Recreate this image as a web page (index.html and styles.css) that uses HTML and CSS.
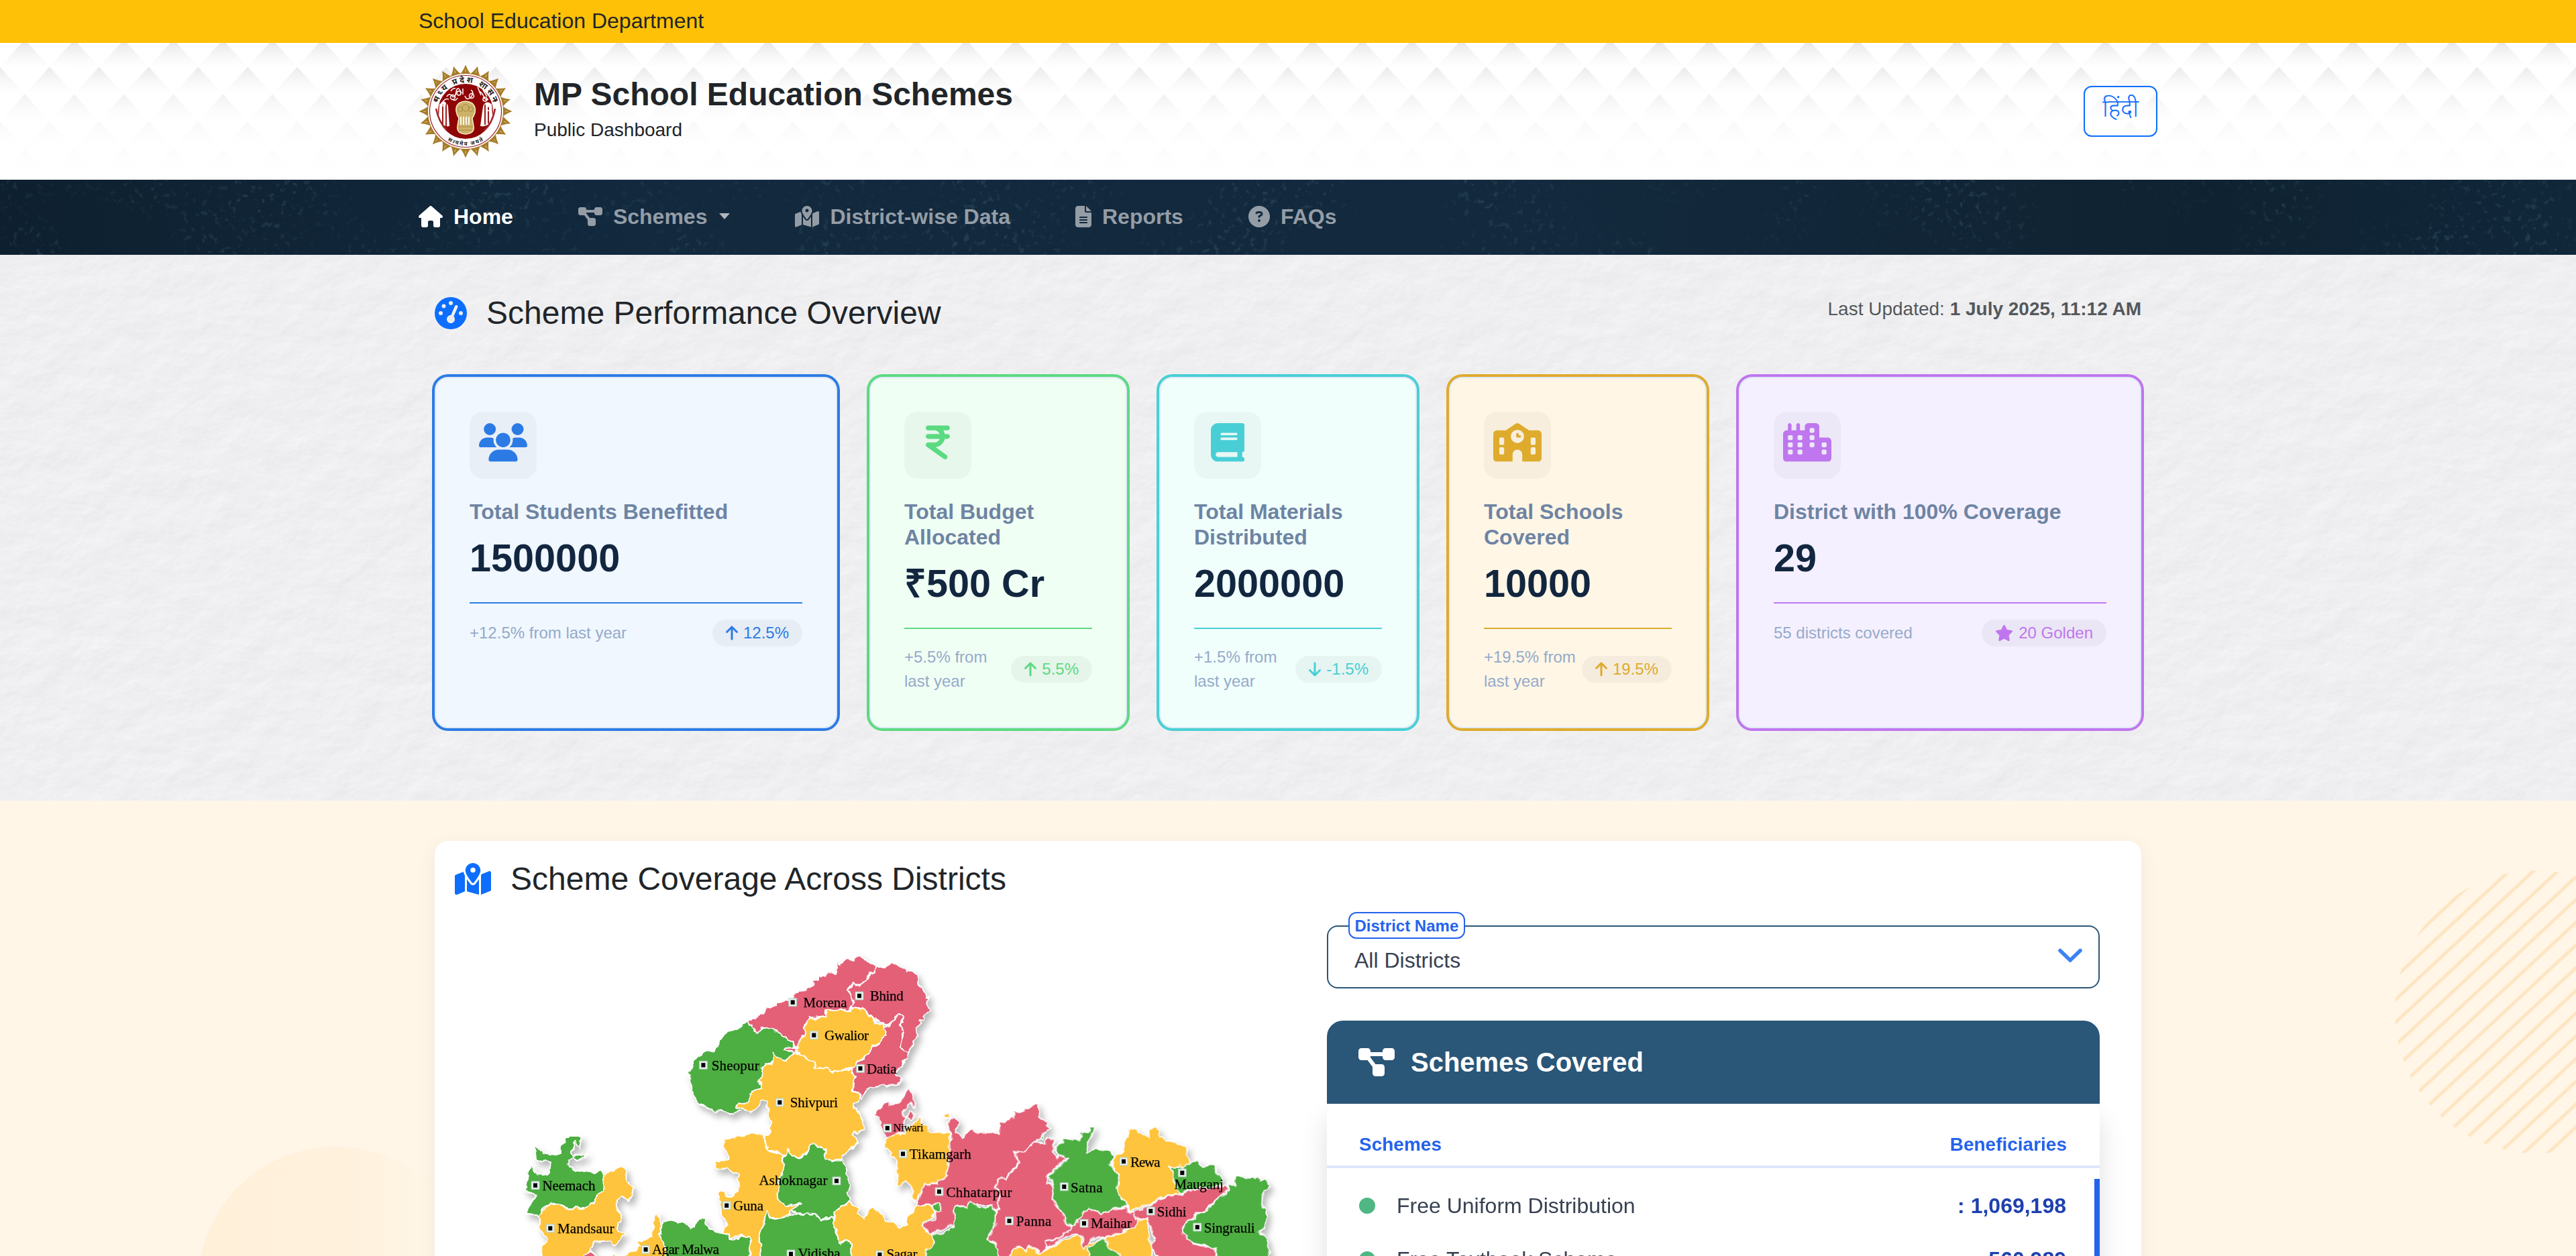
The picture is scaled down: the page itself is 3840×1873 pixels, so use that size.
FILE: index.html
```html
<!DOCTYPE html>
<html lang="en">
<head>
<meta charset="utf-8">
<title>MP School Education Schemes</title>
<link rel="stylesheet" href="styles.css">
</head>
<body>
<svg class="defs" width="0" height="0" aria-hidden="true">
  <symbol id="i-home" viewBox="0 0 576 512"><path d="M575.8 255.5c0 18-15 32.1-32 32.1h-32l.7 160.2c0 2.7-.2 5.4-.5 8.1V472c0 22.1-17.9 40-40 40H456c-1.1 0-2.2 0-3.3-.1c-1.4 .1-2.8 .1-4.2 .1H416 392c-22.1 0-40-17.9-40-40V448 384c0-17.7-14.3-32-32-32H256c-17.7 0-32 14.3-32 32v64 24c0 22.1-17.9 40-40 40H160 128.1c-1.5 0-3-.1-4.5-.2c-1.2 .1-2.4 .2-3.6 .2H104c-22.1 0-40-17.9-40-40V360c0-.9 0-1.9 .1-2.8V287.6H32c-18 0-32-14-32-32.1c0-9 3-17 10-24L266.4 8c7-7 15-8 22-8s15 2 21 7L564.8 231.5c8 7 12 15 11 24z"/></symbol>
  <symbol id="i-diagram" viewBox="0 0 576 512"><path d="M0 80C0 53.5 21.5 32 48 32h96c26.5 0 48 21.5 48 48V96H384V80c0-26.5 21.5-48 48-48h96c26.5 0 48 21.5 48 48v96c0 26.5-21.5 48-48 48H432c-26.5 0-48-21.5-48-48V160H192v16c0 1.7-.1 3.4-.3 5L272 288h96c26.5 0 48 21.5 48 48v96c0 26.5-21.5 48-48 48H272c-26.5 0-48-21.5-48-48V336c0-1.7 .1-3.4 .3-5L144 224H48c-26.5 0-48-21.5-48-48V80z"/></symbol>
  <symbol id="i-map" viewBox="0 0 576 512"><path fill-rule="evenodd" d="M408 120c0 54.6-73.1 151.9-105.2 192c-7.7 9.6-22 9.6-29.6 0C241.1 271.9 168 174.6 168 120C168 53.7 221.7 0 288 0s120 53.7 120 120zm8 80.4c3.5-6.9 6.7-13.8 9.6-20.6c.5-1.2 1-2.5 1.5-3.7l116-46.4C558.9 123.4 576 135 576 152V422.8c0 9.8-6 18.6-15.1 22.3L416 503V200.4zM137.6 138.3c2.4 14.1 7.2 28.3 12.8 41.5c2.9 6.8 6.1 13.7 9.6 20.6V451.8L32.9 502.7C17.1 509 0 497.4 0 480.4V209.6c0-9.8 6-18.6 15.1-22.3l122.6-49zM327.8 332c13.9-17.4 35.7-45.7 56.2-77V504.3L192 449.4V255c20.5 31.3 42.3 59.6 56.2 77c20.5 25.6 59.1 25.6 79.6 0zM288 152a40 40 0 1 0 0-80 40 40 0 1 0 0 80z"/></symbol>
  <symbol id="i-file" viewBox="0 0 384 512"><path fill-rule="evenodd" d="M64 0C28.7 0 0 28.7 0 64V448c0 35.3 28.7 64 64 64H320c35.3 0 64-28.7 64-64V160H256c-17.7 0-32-14.3-32-32V0H64zM256 0V128H384L256 0zM112 256H272c8.8 0 16 7.2 16 16s-7.2 16-16 16H112c-8.8 0-16-7.2-16-16s7.2-16 16-16zm0 64H272c8.8 0 16 7.2 16 16s-7.2 16-16 16H112c-8.8 0-16-7.2-16-16s7.2-16 16-16zm0 64H272c8.8 0 16 7.2 16 16s-7.2 16-16 16H112c-8.8 0-16-7.2-16-16s7.2-16 16-16z"/></symbol>
  <symbol id="i-question" viewBox="0 0 512 512"><path fill-rule="evenodd" d="M256 512A256 256 0 1 0 256 0a256 256 0 1 0 0 512zM169.8 165.3c7.9-22.3 29.1-37.3 52.8-37.3h58.3c34.9 0 63.1 28.3 63.1 63.1c0 22.6-12.1 43.5-31.7 54.8L280 264.4c-.2 13-10.9 23.6-24 23.6c-13.3 0-24-10.7-24-24V250.5c0-8.6 4.6-16.5 12.1-20.8l44.3-25.4c4.7-2.7 7.6-7.7 7.6-13.1c0-8.4-6.8-15.1-15.1-15.1H222.6c-3.4 0-6.4 2.1-7.5 5.3l-.4 1.2c-4.4 12.5-18.2 19-30.6 14.6s-19-18.2-14.6-30.6l.4-1.2zM224 352a32 32 0 1 1 64 0 32 32 0 1 1 -64 0z"/></symbol>
  <symbol id="i-gauge" viewBox="0 0 512 512"><path fill-rule="evenodd" d="M0 256a256 256 0 1 1 512 0A256 256 0 1 1 0 256zM288 96a32 32 0 1 0 -64 0 32 32 0 1 0 64 0zM256 416c35.3 0 64-28.7 64-64c0-17.4-6.9-33.1-18.1-44.6L366 161.7c5.3-12.1-.2-26.3-12.3-31.6s-26.3 .2-31.6 12.3L257.9 288c-.6 0-1.3 0-1.9 0c-35.3 0-64 28.7-64 64s28.7 64 64 64zM176 144a32 32 0 1 0 -64 0 32 32 0 1 0 64 0zM96 288a32 32 0 1 0 0-64 32 32 0 1 0 0 64zm352-32a32 32 0 1 0 -64 0 32 32 0 1 0 64 0z"/></symbol>
  <symbol id="i-users" viewBox="0 0 640 512"><path d="M144 0a80 80 0 1 1 0 160A80 80 0 1 1 144 0zM512 0a80 80 0 1 1 0 160A80 80 0 1 1 512 0zM0 298.7C0 239.8 47.8 192 106.7 192h42.7c15.9 0 31 3.5 44.6 9.7c-1.3 7.2-1.9 14.7-1.9 22.3c0 38.2 16.8 72.5 43.3 96c-.2 0-.4 0-.7 0H21.3C9.6 320 0 310.4 0 298.7zM405.3 320c-.2 0-.4 0-.7 0c26.6-23.5 43.3-57.8 43.3-96c0-7.6-.7-15-1.9-22.3c13.6-6.3 28.7-9.7 44.6-9.7h42.7C592.2 192 640 239.8 640 298.7c0 11.8-9.6 21.3-21.3 21.3H405.3zM224 224a96 96 0 1 1 192 0 96 96 0 1 1 -192 0zM128 485.3C128 411.7 187.7 352 261.3 352H378.7C452.3 352 512 411.7 512 485.3c0 14.7-11.9 26.7-26.7 26.7H154.7c-14.7 0-26.7-11.9-26.7-26.7z"/></symbol>
  <symbol id="i-rupee" viewBox="0 0 320 512"><path d="M0 64C0 46.3 14.3 32 32 32H96h16H288c17.7 0 32 14.3 32 32s-14.3 32-32 32H231.8c9.6 14.4 16.7 30.6 20.7 48H288c17.7 0 32 14.3 32 32s-14.3 32-32 32H252.4c-13.2 58.3-61.9 103.2-122.2 110.9L274.6 422c14.4 10.3 17.7 30.3 7.4 44.6s-30.3 17.7-44.6 7.4L13.4 314C2.1 306-2.7 291.5 1.5 278.2S18.1 256 32 256h80c32.8 0 61-19.7 73.3-48H32c-17.7 0-32-14.3-32-32s14.3-32 32-32H185.3C173 115.7 144.8 96 112 96H96 32C14.3 96 0 81.7 0 64z"/></symbol>
  <symbol id="i-book" viewBox="0 0 448 512"><path fill-rule="evenodd" d="M96 0C43 0 0 43 0 96V416c0 53 43 96 96 96H384h32c17.7 0 32-14.3 32-32s-14.3-32-32-32V384c17.7 0 32-14.3 32-32V32c0-17.7-14.3-32-32-32H384 96zm0 384H352v64H96c-17.7 0-32-14.3-32-32s14.3-32 32-32zm32-240c0-8.8 7.2-16 16-16H336c8.8 0 16 7.2 16 16s-7.2 16-16 16H144c-8.8 0-16-7.2-16-16zm16 48H336c8.8 0 16 7.2 16 16s-7.2 16-16 16H144c-8.8 0-16-7.2-16-16s7.2-16 16-16z"/></symbol>
  <symbol id="i-school" viewBox="0 0 640 512"><path fill-rule="evenodd" d="M337.8 5.4C327-1.8 313-1.8 302.2 5.4L166.3 96H48C21.5 96 0 117.5 0 144V464c0 26.5 21.5 48 48 48H256V416c0-35.3 28.7-64 64-64s64 28.7 64 64v96H592c26.5 0 48-21.5 48-48V144c0-26.5-21.5-48-48-48H473.7L337.8 5.4zM96 192h32c8.8 0 16 7.2 16 16v64c0 8.8-7.2 16-16 16H96c-8.8 0-16-7.2-16-16V208c0-8.8 7.2-16 16-16zm400 16c0-8.8 7.2-16 16-16h32c8.8 0 16 7.2 16 16v64c0 8.8-7.2 16-16 16H512c-8.8 0-16-7.2-16-16V208zM96 320h32c8.8 0 16 7.2 16 16v64c0 8.8-7.2 16-16 16H96c-8.8 0-16-7.2-16-16V336c0-8.8 7.2-16 16-16zm400 16c0-8.8 7.2-16 16-16h32c8.8 0 16 7.2 16 16v64c0 8.8-7.2 16-16 16H512c-8.8 0-16-7.2-16-16V336zM232 176a88 88 0 1 1 176 0 88 88 0 1 1 -176 0zm88-48c-8.8 0-16 7.2-16 16v32c0 8.8 7.2 16 16 16h32c8.8 0 16-7.2 16-16s-7.2-16-16-16H336V144c0-8.8-7.2-16-16-16z"/></symbol>
  <symbol id="i-city" viewBox="0 0 640 512"><path fill-rule="evenodd" d="M480 48c0-26.5-21.5-48-48-48H336c-26.5 0-48 21.5-48 48V96H224V24c0-13.3-10.7-24-24-24s-24 10.7-24 24V96H112V24c0-13.3-10.7-24-24-24S64 10.7 64 24V96H48C21.5 96 0 117.5 0 144v96V464c0 26.5 21.5 48 48 48H592c26.5 0 48-21.5 48-48V240c0-26.5-21.5-48-48-48H480V48z
    M80 160h32a16 16 0 0 1 16 16v32a16 16 0 0 1-16 16h-32a16 16 0 0 1-16-16v-32a16 16 0 0 1 16-16z
    M80 256h32a16 16 0 0 1 16 16v32a16 16 0 0 1-16 16h-32a16 16 0 0 1-16-16v-32a16 16 0 0 1 16-16z
    M80 352h32a16 16 0 0 1 16 16v32a16 16 0 0 1-16 16h-32a16 16 0 0 1-16-16v-32a16 16 0 0 1 16-16z
    M208 160h32a16 16 0 0 1 16 16v32a16 16 0 0 1-16 16h-32a16 16 0 0 1-16-16v-32a16 16 0 0 1 16-16z
    M208 256h32a16 16 0 0 1 16 16v32a16 16 0 0 1-16 16h-32a16 16 0 0 1-16-16v-32a16 16 0 0 1 16-16z
    M208 352h32a16 16 0 0 1 16 16v32a16 16 0 0 1-16 16h-32a16 16 0 0 1-16-16v-32a16 16 0 0 1 16-16z
    M368 64h32a16 16 0 0 1 16 16v32a16 16 0 0 1-16 16h-32a16 16 0 0 1-16-16v-32a16 16 0 0 1 16-16z
    M368 160h32a16 16 0 0 1 16 16v32a16 16 0 0 1-16 16h-32a16 16 0 0 1-16-16v-32a16 16 0 0 1 16-16z
    M368 256h32a16 16 0 0 1 16 16v32a16 16 0 0 1-16 16h-32a16 16 0 0 1-16-16v-32a16 16 0 0 1 16-16z
    M528 256h32a16 16 0 0 1 16 16v32a16 16 0 0 1-16 16h-32a16 16 0 0 1-16-16v-32a16 16 0 0 1 16-16z
    M528 352h32a16 16 0 0 1 16 16v32a16 16 0 0 1-16 16h-32a16 16 0 0 1-16-16v-32a16 16 0 0 1 16-16z"/></symbol>
  <symbol id="i-up" viewBox="0 0 384 512"><path d="M214.6 41.4c-12.5-12.5-32.8-12.5-45.3 0l-160 160c-12.5 12.5-12.5 32.8 0 45.3s32.8 12.5 45.3 0L160 141.2V448c0 17.7 14.3 32 32 32s32-14.3 32-32V141.2L329.4 246.6c12.5 12.5 32.8 12.5 45.3 0s12.5-32.8 0-45.3l-160-160z"/></symbol>
  <symbol id="i-star" viewBox="0 0 576 512"><path d="M316.9 18C311.6 7 300.4 0 288.1 0s-23.4 7-28.8 18L195 150.3 51.4 171.5c-12 1.8-22 10.2-25.7 21.7s-.7 24.2 7.9 32.7L137.8 329 113.2 474.7c-2 12 3 24.2 12.9 31.3s23 8 33.8 2.3l128.3-68.5 128.3 68.5c10.8 5.7 23.9 4.9 33.8-2.3s14.9-19.3 12.9-31.3L438.5 329 542.7 225.9c8.6-8.5 11.7-21.2 7.9-32.7s-13.7-19.9-25.7-21.7L381.2 150.3 316.9 18z"/></symbol>
  <!-- one petal of the seal's toothed rim -->
  <symbol id="petal" viewBox="0 0 140 140" overflow="visible"><path d="M59 18C64 13 67 8 70 .5C73 8 76 13 81 18L82 30H58Z" fill="#a67c28"/><path d="M70 7V11" stroke="#e9d6a4" stroke-width=".8"/></symbol>
  <symbol id="pin" viewBox="-7 -7 14 14" overflow="visible"><path d="M-6-6H6V6H-6Z" fill="#e6f0ea" stroke="#a9cdb8" stroke-width=".8"/><path d="M-3-3.200H3V3.200H-3Z" fill="#000"/></symbol>
</svg>

<div class="topbar"><div class="container">School Education Department</div></div>

<header class="masthead">
  <svg class="backdrop" width="3840" height="204" aria-hidden="true">
    <defs>
      <linearGradient id="tri" x1="0" y1="0" x2="0" y2="1"><stop offset="0" stop-color="#e4e4e7"/><stop offset=".5" stop-color="#f4f4f5"/><stop offset="1" stop-color="#fff"/></linearGradient>
      <linearGradient id="veil" x1="0" y1="0" x2="0" y2="1"><stop offset="0" stop-color="#fff" stop-opacity="0"/><stop offset=".25" stop-color="#fff" stop-opacity=".3"/><stop offset=".6" stop-color="#fff" stop-opacity=".76"/><stop offset="1" stop-color="#fff" stop-opacity="1"/></linearGradient>
      <pattern id="tris" width="73.850" height="81.400" patternUnits="userSpaceOnUse" patternTransform="translate(0 -5)">
        <path d="M36.900 0L73.850 40.700H0Z" fill="url(#tri)"/>
        <path d="M0 40.700L36.900 81.400H-36.900Z" fill="url(#tri)"/>
        <path d="M73.850 40.700L110.800 81.400H36.900Z" fill="url(#tri)"/>
      </pattern>
    </defs>
    <rect width="3840" height="204" fill="url(#tris)"/>
    <rect width="3840" height="204" fill="url(#veil)"/>
  </svg>
  <div class="container masthead-row">
    <svg class="seal" viewBox="0 0 140 140" width="140" height="140">
      <use href="#petal"/><use href="#petal" transform="rotate(15 70 70)"/><use href="#petal" transform="rotate(30 70 70)"/><use href="#petal" transform="rotate(45 70 70)"/><use href="#petal" transform="rotate(60 70 70)"/><use href="#petal" transform="rotate(75 70 70)"/><use href="#petal" transform="rotate(90 70 70)"/><use href="#petal" transform="rotate(105 70 70)"/><use href="#petal" transform="rotate(120 70 70)"/><use href="#petal" transform="rotate(135 70 70)"/><use href="#petal" transform="rotate(150 70 70)"/><use href="#petal" transform="rotate(165 70 70)"/><use href="#petal" transform="rotate(180 70 70)"/><use href="#petal" transform="rotate(195 70 70)"/><use href="#petal" transform="rotate(210 70 70)"/><use href="#petal" transform="rotate(225 70 70)"/><use href="#petal" transform="rotate(240 70 70)"/><use href="#petal" transform="rotate(255 70 70)"/><use href="#petal" transform="rotate(270 70 70)"/><use href="#petal" transform="rotate(285 70 70)"/><use href="#petal" transform="rotate(300 70 70)"/><use href="#petal" transform="rotate(315 70 70)"/><use href="#petal" transform="rotate(330 70 70)"/><use href="#petal" transform="rotate(345 70 70)"/>
      <circle cx="70" cy="70" r="56" fill="#fff"/>
      <circle cx="70" cy="70" r="53.500" fill="none" stroke="#9c1c24" stroke-width="1.200"/>
      <circle cx="70" cy="70" r="41" fill="#8f0505"/>
      <path d="M31 60C36 54 43 56 44 63L46 92C38 94 32 88 30 78ZM109 60C104 54 98 56 96 63L92 92C101 94 108 88 110 78Z" fill="#fff"/>
      <g fill="none" stroke="#8f0505" stroke-width="1.800"><path d="M36 60V90M41 58V92M99 60V90M104 62V88"/></g>
      <g fill="none" stroke="#fff" stroke-width="1.500"><path d="M42 48q4-6 8-1t6-6t8 2M90 40q5 2 7 8t7 4M66 36v9M78 38q6 4-1 12q-6 4-8-3M48 40q3-5 7-4M88 34l5 12M96 38l6 10M36 56q4-6 9-4M50 52q5 4 8-2"/><circle cx="79" cy="47" r="3.500"/><circle cx="51" cy="49" r="3.500"/><circle cx="99" cy="52" r="3"/><circle cx="60" cy="43" r="3"/><circle cx="37" cy="59" r="3"/><circle cx="104" cy="66" r="3"/></g>
      <path d="M26 66Q30 86 42 98M114 66Q110 88 98 98" fill="none" stroke="#a3232b" stroke-width="2.500"/>
      <path d="M60 58Q70 52 80 58Q86 64 84 72Q82 78 80 80L82 92Q84 103 70 104Q56 103 58 92L60 80Q57 76 56 70Q55 62 60 58Z" fill="#cdb36a" stroke="#f7ecc9" stroke-width="1.500"/>
      <g stroke="#9b7d33" stroke-width=".8" fill="none"><circle cx="70" cy="65" r="5"/><circle cx="62" cy="67" r="3.500"/><circle cx="78" cy="67" r="3.500"/><path d="M59 93H81M60 98H80"/></g>
      <path d="M63 78V90M67 78V90M71 78V90M75 78V90" stroke="#fff" stroke-width="1.800"/>
      <circle cx="25.500" cy="54" r="2" fill="#9c1c24"/><circle cx="114.500" cy="54" r="2" fill="#9c1c24"/>
      <path id="arc-top" d="M27 70A43 43 0 0 1 113 70" fill="none"/>
      <path id="arc-bottom" d="M19 70A51 51 0 0 0 121 70" fill="none"/>
      <text class="seal-text"><textPath href="#arc-top" startOffset="50%" text-anchor="middle" textLength="108">मध्य प्रदेश शासन</textPath></text>
      <text class="seal-text seal-motto"><textPath href="#arc-bottom" startOffset="50%" text-anchor="middle" textLength="56">सत्यमेव जयते</textPath></text>
    </svg>
    <div class="brand">
      <h1>MP School Education Schemes</h1>
      <p>Public Dashboard</p>
    </div>
    <button class="lang" lang="hi">हिंदी</button>
  </div>
</header>

<nav class="nav">
  <svg class="backdrop" width="3840" height="112" aria-hidden="true">
    <filter id="speck" x="0" y="0" width="100%" height="100%" color-interpolation-filters="sRGB"><feTurbulence type="fractalNoise" baseFrequency=".11" numOctaves="3" seed="8" result="n"/><feColorMatrix in="n" values="0 0 0 0 .22  0 0 0 0 .36  0 0 0 0 .42  0 6 0 0 -3.500" result="s"/><feTurbulence type="fractalNoise" baseFrequency=".006" numOctaves="2" seed="3"/><feColorMatrix values="0 0 0 0 1  0 0 0 0 1  0 0 0 0 1  4 0 0 0 -1.500"/><feComposite in="s" operator="in"/></filter>
    <rect width="3840" height="112" filter="url(#speck)" opacity=".38"/>
  </svg>
  <div class="container nav-row">
    <a class="active"><svg width="36" height="32"><use href="#i-home"/></svg>Home</a>
    <a><svg width="36" height="32"><use href="#i-diagram"/></svg>Schemes<i class="caret"></i></a>
    <a><svg width="36" height="32"><use href="#i-map"/></svg>District-wise Data</a>
    <a><svg width="24" height="32"><use href="#i-file"/></svg>Reports</a>
    <a><svg width="32" height="32"><use href="#i-question"/></svg>FAQs</a>
  </div>
</nav>

<section class="overview">
  <svg class="backdrop" width="3840" height="814" aria-hidden="true">
    <filter id="paper" x="0" y="0" width="100%" height="100%" color-interpolation-filters="sRGB"><feTurbulence type="fractalNoise" baseFrequency=".02 .026" numOctaves="4" seed="12"/><feDiffuseLighting surfaceScale=".42" diffuseConstant="1.090" lighting-color="#fdfdff"><feDistantLight azimuth="235" elevation="60"/></feDiffuseLighting></filter>
    <rect width="3840" height="814" filter="url(#paper)"/>
  </svg>
  <div class="inner">
    <div class="overview-head">
      <h2><svg width="48" height="48"><use href="#i-gauge"/></svg>Scheme Performance Overview</h2>
      <p>Last Updated: <b>1 July 2025, 11:12 AM</b></p>
    </div>
    <div class="cards">
      <article class="card blue">
        <div class="icon"><svg width="72" height="57.600"><use href="#i-users"/></svg></div>
        <h3>Total Students Benefitted</h3>
        <div class="value">1500000</div>
        <div class="foot"><span>+12.5% from last year</span><span class="pill"><svg width="18" height="24"><use href="#i-up"/></svg>12.5%</span></div>
      </article>
      <article class="card green">
        <div class="icon"><svg width="36" height="57.600"><use href="#i-rupee"/></svg></div>
        <h3>Total Budget Allocated</h3>
        <div class="value">₹500 Cr</div>
        <div class="foot"><span>+5.5% from last year</span><span class="pill"><svg width="18" height="24"><use href="#i-up"/></svg>5.5%</span></div>
      </article>
      <article class="card teal">
        <div class="icon"><svg width="50.400" height="57.600"><use href="#i-book"/></svg></div>
        <h3>Total Materials Distributed</h3>
        <div class="value">2000000</div>
        <div class="foot"><span>+1.5% from last year</span><span class="pill"><svg class="down" width="18" height="24"><use href="#i-up"/></svg>-1.5%</span></div>
      </article>
      <article class="card gold">
        <div class="icon"><svg width="72" height="57.600"><use href="#i-school"/></svg></div>
        <h3>Total Schools Covered</h3>
        <div class="value">10000</div>
        <div class="foot"><span>+19.5% from last year</span><span class="pill"><svg width="18" height="24"><use href="#i-up"/></svg>19.5%</span></div>
      </article>
      <article class="card purple">
        <div class="icon"><svg width="72" height="57.600"><use href="#i-city"/></svg></div>
        <h3>District with 100% Coverage</h3>
        <div class="value">29</div>
        <div class="foot"><span>55 districts covered</span><span class="pill"><svg width="27" height="24"><use href="#i-star"/></svg>20 Golden</span></div>
      </article>
    </div>
  </div>
</section>

<section class="coverage">
  <svg class="backdrop" width="3840" height="679" viewBox="0 1194 3840 679" aria-hidden="true">
    <defs>
      <clipPath id="disc"><circle cx="3781" cy="1509" r="211"/></clipPath>
      <pattern id="hatch" width="24.800" height="24.800" patternUnits="userSpaceOnUse" patternTransform="translate(3570 1509) rotate(-43)"><path d="M0 12H25" stroke="#fee5c2" stroke-width="5"/></pattern>
      <linearGradient id="glow" x1="0" y1="0" x2="1" y2="0"><stop offset="0" stop-color="#fff0da"/><stop offset=".55" stop-color="#fff1dc"/><stop offset="1" stop-color="#fff9ec"/></linearGradient>
    </defs>
    <rect x="3560" y="1280" width="280" height="450" fill="url(#hatch)" clip-path="url(#disc)"/>
    <circle cx="500" cy="1915" r="205" fill="url(#glow)"/>
  </svg>
  <div class="inner panel">
    <h2><svg width="54" height="48"><use href="#i-map"/></svg>Scheme Coverage Across Districts</h2>
    <div class="panel-body">
      <svg class="map" viewBox="780 1400 1140 473" width="1140" height="473">
        <filter id="rough" x="-5%" y="-5%" width="110%" height="110%"><feTurbulence type="fractalNoise" baseFrequency=".09" numOctaves="2" seed="5"/><feDisplacementMap in="SourceGraphic" scale="9" xChannelSelector="R" yChannelSelector="G"/></filter>
        <g class="districts"><g filter="url(#rough)">
          <g transform="translate(740 1400) scale(.39541 .33333)">
            <path class="g" d="M942 370L928 380 912 400 865 424 838 465 832 488 815 503 778 503 772 517 757 520 738 550 740 575 722 597 731 608 732 650 745 700 765 740 818 773 850 768 868 772 878 788 905 775 960 740 1000 670 1010 560 1045 550 1090 545 1120 505 1120 455 1035 396 990 410 985 422 960 380Z"/>
            <path class="p" d="M947 362L975 355 1000 335 1015 305 1055 298 1055 282 1100 278 1120 255 1130 238 1160 235 1165 215 1190 213 1195 185 1210 182 1215 168 1240 165 1250 150 1282 155 1287 103 1300 118 1312 90 1345 92 1350 75 1375 73 1385 90 1400 93 1410 110 1430 120 1428 155 1405 160 1390 190 1365 210 1345 198 1340 215 1325 225 1330 245 1345 265 1342 290 1335 320 1310 315 1300 310 1245 322 1243 345 1200 350 1180 348 1158 400 1165 430 1135 480 1125 500 1090 500 1092 490 1128 485 1115 455 1100 455 1035 398 1000 400 985 422 972 410 962 385 950 382Z"/>
            <path class="p" d="M1430 122L1470 123 1490 108 1510 117 1535 130 1545 147 1572 150 1590 160 1589 200 1614 240 1617 265 1634 268 1622 290 1622 310 1635 318 1612 345 1610 365 1592 362 1597 385 1579 400 1589 432 1577 450 1567 485 1552 505 1522 490 1520 455 1535 430 1525 400 1530 370 1530 345 1520 335 1505 350 1500 365 1468 385 1455 365 1435 370 1415 345 1400 345 1390 315 1345 310 1335 300 1345 270 1325 228 1340 215 1345 198 1365 210 1390 190 1410 160 1428 155Z"/>
            <path class="p" d="M1520 335L1532 345 1525 370 1533 420 1525 455 1522 490 1552 503 1548 520 1538 545 1530 570 1505 600 1525 615 1527 640 1500 652 1470 662 1460 655 1440 660 1395 670 1385 690 1378 715 1370 692 1345 680 1350 620 1340 580 1325 600 1325 590 1350 570 1355 545 1385 535 1410 490 1445 470 1468 430 1460 400 1480 385 1500 365Z"/>
            <path class="y" d="M1045 512L1060 530 1095 548 1105 525 1132 505 1165 530 1200 555 1205 578 1245 575 1258 593 1320 590 1345 575 1338 600 1350 620 1342 680 1370 695 1365 725 1350 740 1360 770 1372 800 1390 850 1365 870 1345 865 1340 880 1358 895 1362 910 1305 970 1300 990 1240 990 1243 940 1225 940 1215 920 1185 920 1145 980 1105 965 1085 972 1040 945 1025 945 1005 880 1035 870 1040 830 1028 800 1022 725 1000 725 967 775 905 755 905 742 948 735 960 688 1000 672 990 630 1005 605 1000 580 1012 560 1042 555Z"/>
            <path class="y" d="M1180 348L1195 360 1243 345 1245 322 1310 312 1335 325 1345 310 1390 315 1400 345 1415 348 1440 380 1455 368 1462 400 1468 432 1448 465 1415 482 1405 515 1375 540 1355 545 1352 570 1300 592 1255 595 1245 575 1205 578 1200 555 1165 530 1133 505 1135 475 1150 450 1165 430 1158 400 1175 360Z"/>
            <path class="y" d="M855 905L890 885 925 888 960 868 1000 872 1010 905 1025 945 1085 972 1078 1000 1085 1040 1062 1090 1065 1165 1100 1195 1140 1185 1112 1215 1100 1245 1060 1255 1045 1250 1010 1260 1010 1340 1000 1440 958 1440 955 1335 900 1330 885 1340 855 1315 872 1280 845 1230 840 1160 835 1125 862 1130 865 1155 895 1155 915 1115 912 1060 870 1030 835 1030 822 1000 830 990 870 992 875 975 860 950Z"/>
            <path class="g" d="M1098 940L1105 960 1145 983 1160 970 1185 920 1205 920 1215 935 1243 940 1240 985 1270 992 1305 992 1320 1030 1322 1075 1335 1100 1322 1130 1335 1170 1300 1195 1275 1225 1265 1250 1240 1245 1225 1262 1205 1235 1150 1230 1112 1215 1145 1185 1110 1182 1095 1195 1065 1165 1062 1085 1085 1040 1078 1000Z"/>
            <path class="g" d="M1020 1215L1030 1245 1060 1258 1110 1232 1200 1232 1225 1262 1260 1245 1280 1280 1285 1330 1295 1365 1325 1345 1340 1370 1340 1440 990 1440 1000 1370 985 1340 1000 1310 1005 1265Z"/>
            <path class="y" d="M1335 1175L1368 1210 1360 1225 1385 1248 1418 1200 1460 1240 1475 1270 1500 1268 1520 1290 1545 1275 1550 1250 1575 1200 1590 1190 1640 1195 1650 1215 1640 1245 1610 1270 1615 1310 1640 1320 1655 1370 1620 1400 1620 1440 1340 1440 1338 1365 1320 1345 1290 1362 1285 1310 1270 1285 1275 1225 1300 1195Z"/>
            <path class="g" d="M258 888L320 888 312 940 298 905 290 945 275 950 285 970 345 962 310 990 285 975 275 985 265 1010 275 1028 365 1048 390 1040 405 1065 402 1130 345 1195 325 1203 265 1203 235 1190 205 1185 180 1200 165 1240 112 1228 125 1190 148 1150 102 1120 115 1090 125 1040 132 1005 155 1055 195 1050 205 1000 150 985 142 925 155 935 175 960 215 968 245 960 245 920 258 910Z"/>
            <path class="y" d="M395 1040L412 1058 440 1030 470 1018 488 1035 490 1080 515 1110 512 1150 495 1170 478 1150 455 1170 455 1215 478 1240 460 1275 455 1300 485 1325 445 1372 430 1350 370 1355 350 1400 350 1440 160 1440 170 1390 190 1345 160 1285 158 1240 205 1183 240 1190 265 1205 325 1203 345 1195 402 1130 405 1065Z"/>
            <path class="p" d="M310 1440L330 1412 355 1400 375 1412 400 1440Z"/>
            <path class="y" d="M608 1222L615 1250 615 1325 640 1370 660 1440 440 1440 440 1410 490 1415 540 1380 535 1355 590 1325 590 1270Z"/>
            <path class="g" d="M622 1268L660 1255 690 1275 715 1270 730 1292 750 1285 762 1255 785 1247 782 1275 820 1310 850 1310 885 1342 955 1332 955 1440 640 1440 640 1380 615 1330Z"/>
          </g>
          <g transform="translate(1340 1400) scale(.39541 .33333)">
            <path class="y" d="M-50 885L20 868 30 840 60 825 80 800 92 830 105 845 115 870 190 865 195 930 183 1000 183 1060 150 1080 145 1095 98 1095 80 1140 65 1175 45 1160 55 1125 30 1085 10 1100 -12 1102 -5 1000 -52 935Z"/>
            <path class="p" d="M-92 785L-77 760 -50 733 -35 730 -30 748 -5 740 20 710 35 672 50 678 48 715 65 740 62 755 45 735 20 760 10 785 30 800 40 770 60 785 50 810 30 800 20 840 10 870 -25 880 -50 885 -62 860 -75 800Z"/>
            <path class="y" d="M170 785L190 773 192 800 170 800Z"/>
            <path class="p" d="M200 895L180 820 205 795 228 820 215 870 235 890 270 850 285 868 335 863 375 880 378 815 400 818 430 800 432 770 470 770 515 735 530 740 530 790 568 845 520 900 480 945 435 955 455 1000 420 1040 405 1078 385 1063 365 1105 380 1140 375 1200 355 1210 350 1190 290 1190 272 1180 260 1195 212 1195 210 1280 110 1320 92 1280 135 1250 130 1190 72 1190 78 1150 98 1095 145 1095 150 1080 183 1060 183 1000 192 905Z"/>
            <path class="g" d="M272 1178L290 1190 310 1205 350 1190 362 1215 365 1290 335 1345 370 1370 370 1440 100 1440 105 1390 135 1370 125 1320 190 1305 208 1285 212 1200 255 1195Z"/>
            <path class="g" d="M125 1190L155 1185 155 1215 140 1220Z"/>
            <path class="g" d="M530 890L548 872 542 898Z"/>
            <path class="p" d="M520 905L555 915 560 895 582 895 580 925 592 985 605 965 640 980 605 1000 605 1020 558 1060 562 1095 585 1100 578 1170 620 1230 630 1275 655 1290 605 1340 555 1355 555 1385 535 1410 490 1375 480 1400 455 1378 430 1385 410 1440 375 1440 365 1355 335 1345 365 1270 365 1205 378 1210 375 1120 365 1105 385 1063 405 1078 455 1000 435 955 480 945Z"/>
            <path class="g" d="M718 840L735 850 720 890 715 905 708 955 745 943 795 948 810 970 795 1010 830 1055 828 1145 865 1190 760 1230 718 1205 690 1240 655 1285 630 1275 620 1230 578 1170 585 1105 560 1060 605 1020 640 980 600 965 588 935 615 910 615 890 660 898 690 895 680 865 715 870Z"/>
            <path class="y" d="M868 850L893 850 905 870 945 885 945 850 970 840 985 855 980 885 1020 905 1050 915 1085 930 1087 965 1103 1000 1110 1050 1080 1135 1010 1150 870 1222 865 1190 825 1145 830 1055 800 1010 815 970 848 945 848 910 865 885Z"/>
            <path class="y" d="M560 1385L650 1335 680 1320 690 1370 745 1350 775 1338 845 1318 910 1255 935 1255 945 1330 950 1380 960 1440 410 1440 430 1385 455 1378 480 1400 490 1375 535 1410Z"/>
            <path class="p" d="M715 1205L760 1230 862 1195 865 1225 885 1222 905 1260 890 1290 850 1300 845 1320 770 1335 720 1340 715 1370 695 1385 690 1330 650 1320 555 1385 555 1355 605 1340 655 1285 690 1240Z"/>
            <path class="g" d="M715 1385L770 1335 800 1390 830 1410 830 1440 720 1440Z"/>
            <path class="p" d="M1235 1105L1248 1122 1180 1185 1150 1215 1120 1230 1105 1255 1065 1300 1110 1365 1190 1385 1200 1440 985 1440 950 1380 965 1340 935 1250 895 1255 885 1225 1010 1155 1060 1140 1120 1120 1215 1105Z"/>
            <path class="g" d="M1120 990L1150 1015 1188 1015 1205 1060 1220 1070 1215 1105 1120 1120 1060 1135 1035 1085 1030 1050 1022 1020 1060 1018 1070 1030 1090 1008Z"/>
            <path class="g" d="M1268 1057L1310 1075 1355 1058 1360 1080 1385 1082 1398 1110 1375 1125 1370 1200 1388 1215 1380 1290 1360 1310 1387 1345 1400 1390 1380 1440 1200 1440 1192 1385 1108 1360 1065 1308 1085 1265 1120 1250 1125 1230 1150 1220 1180 1190 1248 1122 1240 1095 1268 1105Z"/>
          </g>
        </g></g>
        <g class="pins">
          <use href="#pin" x="1274" y="1478" width="14" height="14"/><use href="#pin" x="1174.700" y="1487.700" width="14" height="14"/><use href="#pin" x="1206.300" y="1536.700" width="14" height="14"/><use href="#pin" x="1041.400" y="1581.300" width="14" height="14"/><use href="#pin" x="1275.500" y="1586.300" width="14" height="14"/><use href="#pin" x="1155.300" y="1637" width="14" height="14"/><use href="#pin" x="1315.800" y="1675.300" width="14" height="14"/><use href="#pin" x="1339" y="1713.700" width="14" height="14"/><use href="#pin" x="1240" y="1754" width="14" height="14"/><use href="#pin" x="1076.200" y="1790.700" width="14" height="14"/><use href="#pin" x="791" y="1760.700" width="14" height="14"/><use href="#pin" x="813.300" y="1824.700" width="14" height="14"/><use href="#pin" x="955.600" y="1856.300" width="14" height="14"/><use href="#pin" x="1172" y="1863" width="14" height="14"/><use href="#pin" x="1304.400" y="1864" width="14" height="14"/><use href="#pin" x="1393" y="1770" width="14" height="14"/><use href="#pin" x="1497.500" y="1813.700" width="14" height="14"/><use href="#pin" x="1579.300" y="1762.700" width="14" height="14"/><use href="#pin" x="1609" y="1817.300" width="14" height="14"/><use href="#pin" x="1668" y="1725" width="14" height="14"/><use href="#pin" x="1755.300" y="1742" width="14" height="14"/><use href="#pin" x="1708.300" y="1799" width="14" height="14"/><use href="#pin" x="1777.800" y="1823" width="14" height="14"/>
        </g>
        <g class="names">
          <text x="1296.700" y="1492" textLength="50">Bhind</text>
          <text x="1197.500" y="1502" textLength="65">Morena</text>
          <text x="1229" y="1551" textLength="66">Gwalior</text>
          <text x="1060.700" y="1596" textLength="71">Sheopur</text>
          <text x="1292" y="1601" textLength="44.500">Datia</text>
          <text x="1177.700" y="1651" textLength="71.500">Shivpuri</text>
          <text class="small" x="1331.500" y="1687" textLength="45">Niwari</text>
          <text x="1355.800" y="1728" textLength="92">Tikamgarh</text>
          <text x="1131.500" y="1766.500" textLength="102">Ashoknagar</text>
          <text x="1093" y="1805" textLength="45">Guna</text>
          <text x="808.400" y="1775" textLength="79">Neemach</text>
          <text x="831" y="1839" textLength="84.500">Mandsaur</text>
          <text x="972" y="1870" textLength="100">Agar Malwa</text>
          <text x="1189.600" y="1876" textLength="63">Vidisha</text>
          <text x="1321.400" y="1877" textLength="46">Sagar</text>
          <text x="1410.400" y="1785" textLength="98">Chhatarpur</text>
          <text x="1514.800" y="1828" textLength="52.500">Panna</text>
          <text x="1596" y="1778" textLength="47.500">Satna</text>
          <text x="1625.900" y="1831" textLength="61">Maihar</text>
          <text x="1685" y="1740" textLength="44.500">Rewa</text>
          <text x="1750.400" y="1773" textLength="73.500">Mauganj</text>
          <text x="1724.700" y="1814" textLength="44">Sidhi</text>
          <text x="1794.700" y="1838" textLength="76">Singrauli</text>
        </g>
      </svg>
      <div class="side">
        <div class="select">
          <span class="select-label">District Name</span>
          <span>All Districts</span>
          <svg width="36" height="21" viewBox="0 0 36 21"><path d="M3 3.500L18 18L33 3.500" fill="none" stroke="#3b82f6" stroke-width="5.500" stroke-linecap="round" stroke-linejoin="miter"/></svg>
        </div>
        <div class="schemes">
          <h4><svg width="54" height="48"><use href="#i-diagram"/></svg>Schemes Covered</h4>
          <div class="table">
            <div class="thead"><span>Schemes</span><span>Beneficiaries</span></div>
            <div class="rows">
              <div class="row"><i class="dot"></i><span>Free Uniform Distribution</span><b>: 1,069,198</b></div>
              <div class="row"><i class="dot"></i><span>Free Textbook Scheme</span><b>: 560,989</b></div>
            </div>
          </div>
        </div>
      </div>
    </div>
  </div>
</section>
</body>
</html>
```
FILE: styles.css
```css
* { box-sizing: border-box; }
body {
  margin: 0;
  width: 3840px;
  height: 1873px;
  overflow: hidden;
  font-family: "Liberation Sans", Arial, sans-serif;
  font-size: 32px;
  line-height: 1.5;
  color: #212529;
  background: #fff;
}
h1, h2, h3, h4, p { margin: 0; }
svg { display: block; flex: none; fill: currentColor; }
.defs { position: absolute; }
.container { width: 2592px; margin: 0 auto; position: relative; }
.inner { width: 2544px; margin: 0 auto; position: relative; }
.backdrop { position: absolute; left: 0; top: 0; }

.topbar { height: 64px; background: #ffc107; line-height: 62px; }

.masthead { position: relative; height: 204px; overflow: hidden; }
.masthead-row { display: flex; align-items: center; height: 203px; }
.seal-text { font: 700 12px "Noto Sans Devanagari", "Noto Sans", sans-serif; fill: #222; }
.seal-motto { font-size: 8px; }
.brand { margin-left: 32px; flex: 1; }
.brand h1 { font-size: 48px; line-height: 58px; font-weight: 700; margin-top: -4px; }
.brand p { font-size: 28px; line-height: 42px; margin-top: 3px; }
.lang {
  width: 110px;
  height: 76px;
  padding: 0 0 6px;
  border: 2px solid #0d6efd;
  border-radius: 12px;
  background: transparent;
  color: #0d6efd;
  font: 300 36px/1.4 "Liberation Sans", "Noto Sans Devanagari", "Noto Sans", sans-serif;
}

.nav {
  position: relative;
  height: 112px;
  overflow: hidden;
  background: linear-gradient(90deg, #0e202f, #12293e 25%, #13293d 60%, #0f2231 86%, #10273a);
}
.nav-row { display: flex; gap: 97px; align-items: center; height: 109px; font-weight: 700; }
.nav-row a { display: flex; align-items: center; gap: 16px; color: #949da6; }
.nav-row a.active { color: #fff; }
.caret { border: 8px solid transparent; border-top: 9px solid #b0b6bc; border-bottom: 0; margin-left: 2px; }

.overview { position: relative; height: 814px; background: #f0f0f2; padding-top: 58px; }
.overview-head { display: flex; justify-content: space-between; }
h2 { display: flex; align-items: center; gap: 29px; font-size: 48px; line-height: 58px; font-weight: 400; }
h2 svg { color: #0d6efd; }
.overview-head p { font-size: 28px; line-height: 42px; margin-top: 2px; color: #54585b; }

.cards { display: grid; grid-template-columns: 600px 384px 384px 384px 600px; gap: 48px; height: 524px; margin-top: 66px; }
.card {
  border: 2px solid #dfe9f6;
  border-radius: 20px;
  padding: 50px;
  box-shadow: 0 0 0 4px var(--tone);
  background: var(--tint);
}
.blue { --tone: #2c7be5; --tint: #f0f7ff; }
.green { --tone: #5cda81; --tint: #f0fff4; }
.teal { --tone: #48cfd5; --tint: #f0fffc; }
.gold { --tone: #dfab2d; --tint: #fff6e6; }
.purple { --tone: #bf76ee; --tint: #f5f0ff; }
.icon {
  width: 100px;
  height: 100px;
  padding-top: 17px;
  border-radius: 20px;
  background: rgba(0, 0, 0, .033);
  color: var(--tone);
  display: flex;
  justify-content: center;
  align-items: flex-start;
}
.card h3 { margin: 30px 0 16px; font-size: 32px; line-height: 38px; color: #6e84a3; }
.value { font-size: 57.6px; line-height: 69px; font-weight: 700; color: #12263f; margin-bottom: 31px; }
.foot {
  display: flex;
  justify-content: space-between;
  align-items: center;
  border-top: 2px solid var(--tone);
  padding-top: 24px;
  font-size: 24px;
  line-height: 36px;
  color: #95aac9;
}
.pill {
  display: flex;
  flex: none;
  align-items: center;
  gap: 8px;
  height: 40px;
  padding: 0 20px;
  border-radius: 20px;
  background: rgba(0, 0, 0, .04);
  color: var(--tone);
}
.down { transform: scaleY(-1); }

.coverage { position: relative; height: 679px; padding-top: 60px; background: #fff6e8; overflow: hidden; }
.panel {
  height: 760px;
  padding: 28px 62px 0 30px;
  border-radius: 20px;
  background: #fff;
  box-shadow: 0 8px 32px rgba(0, 0, 0, .06);
}
.panel-body { display: flex; justify-content: space-between; }
.map { margin: 60px 0 0 102px; overflow: visible; }
.districts { filter: drop-shadow(5px 7px 5px rgba(0, 0, 0, .27)); }
.districts path { stroke: #fff; stroke-width: 2px; vector-effect: non-scaling-stroke; stroke-linejoin: round; }
.g { fill: #4dae42; }
.y { fill: #ffc43c; }
.p { fill: #e36077; }
.names { font-family: "Liberation Serif", "Times New Roman", serif; font-size: 21px; fill: #000; }
.names text { stroke: #000; stroke-width: .25px; }
.names .small { font-size: 16.5px; }

.side { width: 1152px; padding-top: 40px; }
.select {
  position: relative;
  display: flex;
  justify-content: space-between;
  height: 94px;
  padding: 26px 24px 0 39px;
  border: 2px solid #2a5678;
  border-radius: 16px;
  line-height: 48px;
  color: #374151;
}
.select svg { margin-top: 6px; }
.select-label {
  position: absolute;
  left: 30px;
  top: -22px;
  height: 40px;
  padding: 0 7.5px;
  border: 2px solid #2563eb;
  border-radius: 12px;
  background: #fff;
  color: #2563eb;
  font-size: 24px;
  line-height: 37px;
  font-weight: 700;
}
.schemes { margin-top: 48px; }
.schemes h4 {
  display: flex;
  align-items: center;
  gap: 24px;
  height: 124px;
  padding-left: 47px;
  border-radius: 24px 24px 0 0;
  background: #2a5678;
  color: #fff;
  font-size: 40px;
}
.table { height: 400px; border-radius: 16px; background: #fff; box-shadow: 0 20px 40px rgba(0, 0, 0, .13); clip-path: inset(0 -60px -60px -60px); }
.thead {
  display: flex;
  justify-content: space-between;
  height: 96px;
  padding: 40px 49px 0 48px;
  border-bottom: 4px solid #dfe6fd;
  color: #2563eb;
  font-size: 28px;
  font-weight: 700;
}
.rows { margin-top: 16px; border-right: 8px solid #2563eb; height: 280px; }
.row { display: flex; align-items: center; height: 80px; padding: 0 42px 0 48px; color: #374151; }
.row b { margin-left: auto; color: #1e40af; }
.dot { width: 24px; height: 24px; border-radius: 50%; background: #4fb783; margin-right: 32px; }
```
